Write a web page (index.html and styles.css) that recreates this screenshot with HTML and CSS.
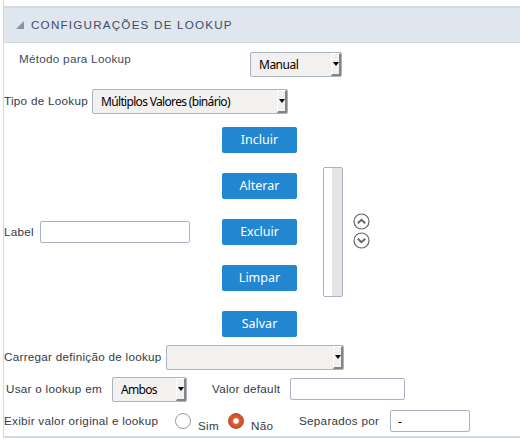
FILE: index.html
```html
<!DOCTYPE html>
<html lang="pt-BR">
<head>
<meta charset="utf-8">
<title>Configurações de Lookup</title>
<link rel="stylesheet" href="styles.css">
</head>
<body>
<section class="panel">
  <header class="panel-header">
    <svg class="collapse" width="8" height="8" viewBox="0 0 8 8"><path d="M8 0V8H0Z" fill="#8395ab"/></svg>
    <h1>CONFIGURAÇÕES DE LOOKUP</h1>
  </header>
  <div class="row method">
    <span class="label">Método para Lookup</span>
    <div class="select"><span class="value">Manual</span><i class="arrow"></i></div>
  </div>
  <div class="row type">
    <span class="label">Tipo de Lookup</span>
    <div class="select"><span class="value tight">Múltiplos Valores (binário)</span><i class="arrow"></i></div>
  </div>
  <div class="row editor">
    <span class="label">Label</span>
    <input class="field" type="text" aria-label="Label">
    <div class="buttons">
      <button>Incluir</button>
      <button>Alterar</button>
      <button>Excluir</button>
      <button>Limpar</button>
      <button>Salvar</button>
    </div>
    <div class="listbox"></div>
    <div class="movers">
      <svg width="17" height="17" viewBox="0 0 17 17"><circle cx="8.5" cy="8.5" r="7.5"/><path d="M4.8 10.2 8.5 6.8 12.2 10.2"/></svg>
      <svg width="17" height="17" viewBox="0 0 17 17"><circle cx="8.5" cy="8.5" r="7.5"/><path d="M4.8 6.8 8.5 10.2 12.2 6.8"/></svg>
    </div>
  </div>
  <div class="row load">
    <span class="label">Carregar definição de lookup</span>
    <div class="select"><span class="value"></span><i class="arrow"></i></div>
  </div>
  <div class="row usage">
    <span class="label">Usar o lookup em</span>
    <div class="select"><span class="value tight">Ambos</span><i class="arrow"></i></div>
    <span class="label default-label">Valor default</span>
    <input class="field" type="text" aria-label="Valor default">
  </div>
  <div class="row display">
    <span class="label">Exibir valor original e lookup</span>
    <i class="radio"></i><span class="label option yes">Sim</span>
    <i class="radio checked"></i><span class="label option no">Não</span>
    <span class="label separator">Separados por</span>
    <input class="field" type="text" value="-" aria-label="Separados por">
  </div>
</section>
</body>
</html>
```
FILE: styles.css
```css
* { box-sizing: border-box; }
body {
  margin: 0;
  background: #fff;
  color: #333b46;
  font: 11.7px/14px "Liberation Sans", Arial, sans-serif;
  overflow: hidden;
}
.panel {
  height: 438px;
  margin-left: 3px;
  padding-top: 6px;
  border-left: 1px solid #cfdbe3;
  border-bottom: 2px solid #d0dce5;
  box-shadow: 0 1px #dfe6ee;
}
.panel-header {
  display: flex;
  align-items: center;
  gap: 7px;
  height: 37px;
  padding-left: 12px;
  background: #dfe6ee;
  border-top: 2px solid #cfdce1;
  border-bottom: 1px solid #cfdae2;
}
.panel-header h1 {
  margin: 0;
  color: #3e4c65;
  font-size: 11.7px;
  font-weight: normal;
  letter-spacing: 1.18px;
}
.row { display: flex; align-items: center; }
.label { flex: none; white-space: nowrap; letter-spacing: .27px; }
.select {
  display: flex;
  flex: none;
  height: 25px;
  background: #f2f1f0;
  border: 1px solid #a9b3c3;
  border-radius: 2px;
}
.value {
  flex: 1;
  padding-left: 8px;
  color: #000;
  font: 12px/24px "Noto Sans", sans-serif;
  letter-spacing: -.5px;
  white-space: nowrap;
}
.tight { letter-spacing: -.67px; }
.arrow {
  display: grid;
  place-items: center;
  width: 10px;
  height: 23px;
  border: solid;
  border-width: 1px 2px 2px 1px;
  border-color: #fff #858585 #858585 #fff;
}
.arrow::before {
  content: "";
  border: 3px solid transparent;
  border-top: 4px solid #000;
  border-bottom: 0;
}
.field {
  flex: none;
  height: 22px;
  padding: 0 7px;
  background: #fff;
  border: 1px solid #a9b3c3;
  border-radius: 2px;
  color: #000;
  font: 12px "Noto Sans", sans-serif;
}
.method { height: 43px; padding-left: 15px; }
.method .label { width: 231px; margin-bottom: 11px; color: #3e4c5d; }
.method .select { width: 92px; }
.type { height: 31px; }
.type .label { width: 88px; margin-bottom: 2px; }
.type .select { width: 196px; }
.editor { height: 230px; }
.editor > .label { width: 36px; }
.editor .field { width: 150px; }
.buttons { display: flex; flex-direction: column; gap: 20px; margin-left: 32px; }
.buttons button {
  width: 75px;
  height: 26px;
  padding: 0;
  border: 0;
  border-radius: 2px;
  background: #2386d1;
  color: #fff;
  font: 12.5px/26px "Noto Sans", sans-serif;
}
.listbox {
  width: 20px;
  height: 130px;
  margin-left: 26px;
  border: 1px solid #a9b3c3;
  border-radius: 2px;
  background: linear-gradient(90deg, #fff 8px, #e4e4e4 8px);
}
.movers { display: grid; gap: 2px; margin: 0 0 3px 10px; }
.movers svg { display: block; fill: none; stroke: #666; stroke-width: 1.2; }
.movers path { stroke-width: 2; }
.load { height: 20px; }
.load .label { width: 162px; }
.load .select { width: 178px; }
.usage { height: 44px; padding-left: 2px; }
.usage .label:first-child { width: 106px; }
.usage .select { width: 75px; }
.usage .default-label { width: 78px; margin-left: 25px; }
.usage .field { width: 115px; }
.display { height: 20px; }
.display .label:first-child { width: 171px; }
.radio {
  width: 16px;
  height: 16px;
  border: 1px solid #9b9b9b;
  border-radius: 50%;
  background: #fff;
}
.radio.checked {
  border-color: #b6502d;
  background: radial-gradient(circle, #fff 2.3px, #e5602f 3.3px, #d9552b 5px, #c95227 7px);
}
.option { margin: 10px 0 0 7px; }
.yes { width: 30px; }
.no { width: 48px; }
.separator { width: 91px; }
.display .field { width: 80px; }
```
